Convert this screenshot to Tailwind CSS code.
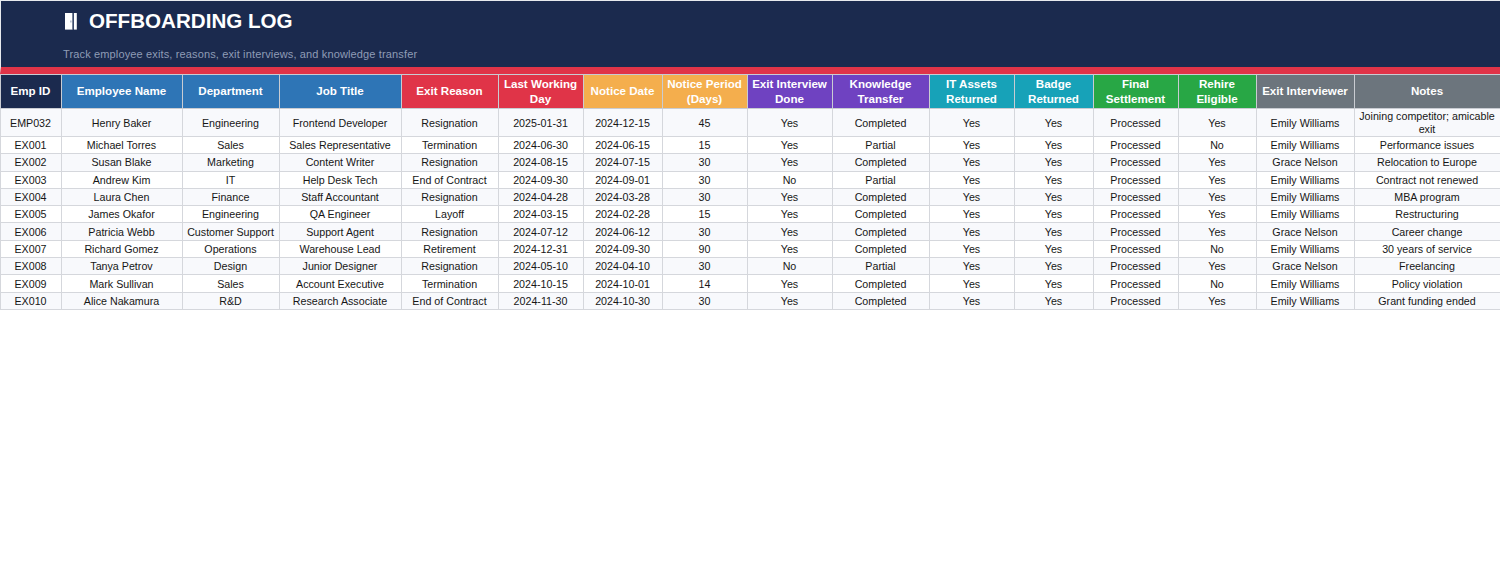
<!DOCTYPE html>
<html lang="en">
<head>
<meta charset="UTF-8" />
<title>Offboarding Log</title>
<script src="https://cdn.jsdelivr.net/npm/@tailwindcss/browser@4"></script>
</head>
<body class="bg-white font-['Liberation_Sans',Arial,sans-serif]">

<!-- HEADER -->
<header class="h-[74px] bg-[#1b2a4e] border-t border-l border-t-[#e8eaee] border-l-[#e8eaee] border-b-[7px] border-b-[#e03448] pl-[62px] pt-[8px]">
  <div class="flex items-center gap-[11px] h-[23px]">
    <svg width="14" height="18" viewBox="0 0 14 18" class="shrink-0 ml-[1px]">
      <path fill="#ffffff" d="M1 1h7.6v16.6H1z"/>
      <path fill="#ffffff" d="M10 1h2.8v16.6H10z"/>
      <path fill="#3b4a6b" d="M8.6 1H10v16.6H8.6z"/>
      <path fill="#8f9cb6" d="M6.4 8.5h1v2h-1z"/>
    </svg>
    <h1 class="text-[20.6px] leading-[23px] font-bold text-white">OFFBOARDING LOG</h1>
  </div>
  <p class="mt-[14px] text-[11px] tracking-[0.14px] leading-[16px] text-[#8f9cb6]">Track employee exits, reasons, exit interviews, and knowledge transfer</p>
</header>

<!-- TABLE -->
<table class="w-[1500px] table-fixed border-collapse text-center text-[10.7px] leading-[13px] text-[#161616] [&_td]:border [&_td]:border-[#d5d7dc] [&_td]:pt-[1px] [&_td]:pr-[1px] [&_td]:h-[17.3px] [&_th]:border [&_th]:border-[#c9ccd2] [&_th]:pb-[2px] [&_th]:pr-[1px] [&_th]:h-[34px] [&_th]:text-[11.6px] [&_th]:leading-[15px] [&_th]:font-bold [&_th]:text-white">
  <colgroup>
    <col class="w-[61px]"><col class="w-[121px]"><col class="w-[97px]"><col class="w-[122px]">
    <col class="w-[97px]"><col class="w-[85px]"><col class="w-[79px]"><col class="w-[85px]">
    <col class="w-[85px]"><col class="w-[97px]"><col class="w-[85px]"><col class="w-[79px]">
    <col class="w-[85px]"><col class="w-[78px]"><col class="w-[98px]"><col class="w-[146px]">
  </colgroup>
  <thead>
    <tr>
      <th class="bg-[#1b2a4e]">Emp ID</th>
      <th class="bg-[#2e75b6]">Employee Name</th>
      <th class="bg-[#2e75b6]">Department</th>
      <th class="bg-[#2e75b6]">Job Title</th>
      <th class="bg-[#e03448]">Exit Reason</th>
      <th class="bg-[#e03448]">Last Working Day</th>
      <th class="bg-[#f4ae4d]">Notice Date</th>
      <th class="bg-[#f4ae4d]">Notice Period (Days)</th>
      <th class="bg-[#6f42c1]">Exit Interview Done</th>
      <th class="bg-[#6f42c1]">Knowledge Transfer</th>
      <th class="bg-[#17a2b8]">IT Assets Returned</th>
      <th class="bg-[#17a2b8]">Badge Returned</th>
      <th class="bg-[#28a745]">Final Settlement</th>
      <th class="bg-[#28a745]">Rehire Eligible</th>
      <th class="bg-[#6c757d]">Exit Interviewer</th>
      <th class="bg-[#6c757d]">Notes</th>
    </tr>
  </thead>
  <tbody class="[&>tr:nth-child(odd)]:bg-[#f8f9fc]">
    <tr class="[&>td]:h-[28px]"><td>EMP032</td><td>Henry Baker</td><td>Engineering</td><td>Frontend Developer</td><td>Resignation</td><td>2025-01-31</td><td>2024-12-15</td><td>45</td><td>Yes</td><td>Completed</td><td>Yes</td><td>Yes</td><td>Processed</td><td>Yes</td><td>Emily Williams</td><td>Joining competitor; amicable exit</td></tr>
    <tr><td>EX001</td><td>Michael Torres</td><td>Sales</td><td>Sales Representative</td><td>Termination</td><td>2024-06-30</td><td>2024-06-15</td><td>15</td><td>Yes</td><td>Partial</td><td>Yes</td><td>Yes</td><td>Processed</td><td>No</td><td>Emily Williams</td><td>Performance issues</td></tr>
    <tr><td>EX002</td><td>Susan Blake</td><td>Marketing</td><td>Content Writer</td><td>Resignation</td><td>2024-08-15</td><td>2024-07-15</td><td>30</td><td>Yes</td><td>Completed</td><td>Yes</td><td>Yes</td><td>Processed</td><td>Yes</td><td>Grace Nelson</td><td>Relocation to Europe</td></tr>
    <tr><td>EX003</td><td>Andrew Kim</td><td>IT</td><td>Help Desk Tech</td><td>End of Contract</td><td>2024-09-30</td><td>2024-09-01</td><td>30</td><td>No</td><td>Partial</td><td>Yes</td><td>Yes</td><td>Processed</td><td>Yes</td><td>Emily Williams</td><td>Contract not renewed</td></tr>
    <tr><td>EX004</td><td>Laura Chen</td><td>Finance</td><td>Staff Accountant</td><td>Resignation</td><td>2024-04-28</td><td>2024-03-28</td><td>30</td><td>Yes</td><td>Completed</td><td>Yes</td><td>Yes</td><td>Processed</td><td>Yes</td><td>Emily Williams</td><td>MBA program</td></tr>
    <tr><td>EX005</td><td>James Okafor</td><td>Engineering</td><td>QA Engineer</td><td>Layoff</td><td>2024-03-15</td><td>2024-02-28</td><td>15</td><td>Yes</td><td>Completed</td><td>Yes</td><td>Yes</td><td>Processed</td><td>Yes</td><td>Emily Williams</td><td>Restructuring</td></tr>
    <tr><td>EX006</td><td>Patricia Webb</td><td>Customer Support</td><td>Support Agent</td><td>Resignation</td><td>2024-07-12</td><td>2024-06-12</td><td>30</td><td>Yes</td><td>Completed</td><td>Yes</td><td>Yes</td><td>Processed</td><td>Yes</td><td>Grace Nelson</td><td>Career change</td></tr>
    <tr><td>EX007</td><td>Richard Gomez</td><td>Operations</td><td>Warehouse Lead</td><td>Retirement</td><td>2024-12-31</td><td>2024-09-30</td><td>90</td><td>Yes</td><td>Completed</td><td>Yes</td><td>Yes</td><td>Processed</td><td>No</td><td>Emily Williams</td><td>30 years of service</td></tr>
    <tr><td>EX008</td><td>Tanya Petrov</td><td>Design</td><td>Junior Designer</td><td>Resignation</td><td>2024-05-10</td><td>2024-04-10</td><td>30</td><td>No</td><td>Partial</td><td>Yes</td><td>Yes</td><td>Processed</td><td>Yes</td><td>Grace Nelson</td><td>Freelancing</td></tr>
    <tr><td>EX009</td><td>Mark Sullivan</td><td>Sales</td><td>Account Executive</td><td>Termination</td><td>2024-10-15</td><td>2024-10-01</td><td>14</td><td>Yes</td><td>Completed</td><td>Yes</td><td>Yes</td><td>Processed</td><td>No</td><td>Emily Williams</td><td>Policy violation</td></tr>
    <tr><td>EX010</td><td>Alice Nakamura</td><td>R&amp;D</td><td>Research Associate</td><td>End of Contract</td><td>2024-11-30</td><td>2024-10-30</td><td>30</td><td>Yes</td><td>Completed</td><td>Yes</td><td>Yes</td><td>Processed</td><td>Yes</td><td>Emily Williams</td><td>Grant funding ended</td></tr>
  </tbody>
</table>

</body>
</html>
